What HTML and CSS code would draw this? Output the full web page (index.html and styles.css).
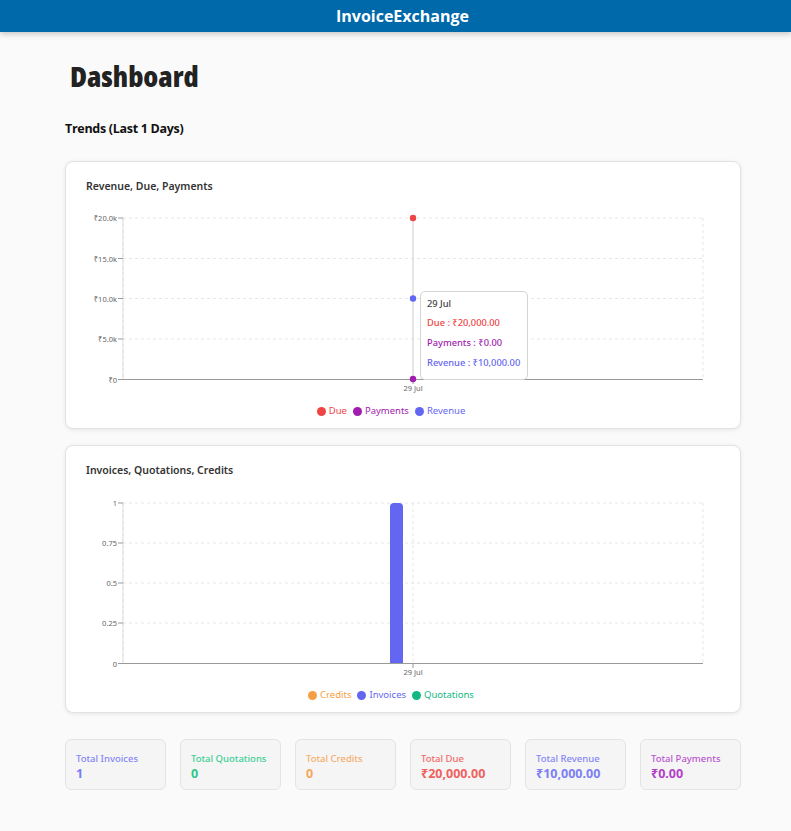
FILE: index.html
```html
<!DOCTYPE html>
<html>
<head>
<meta charset="utf-8">
<link rel="stylesheet" href="styles.css">
</head>
<body>
<header class="topbar">InvoiceExchange</header>
<main class="main">
  <h1 class="page-title">Dashboard</h1>
  <h2 class="section-title">Trends (Last 1 Days)</h2>

  <section class="card">
    <h3 class="card-title">Revenue, Due, Payments</h3>
    <div class="chart">
      <svg class="chart-svg" width="637" height="196" viewBox="0 0 637 196">
        <g class="grid">
          <line x1="37" y1="17" x2="617" y2="17"/>
          <line x1="37" y1="57.5" x2="617" y2="57.5"/>
          <line x1="37" y1="97.5" x2="617" y2="97.5"/>
          <line x1="37" y1="138" x2="617" y2="138"/>
          <line x1="37" y1="17" x2="37" y2="178"/>
          <line x1="617" y1="17" x2="617" y2="178"/>
        </g>
        <g class="axis">
          <line x1="37" y1="178.5" x2="617" y2="178.5"/>
          <line x1="37" y1="17" x2="37" y2="178" class="yaxis"/>
          <line x1="32" y1="17" x2="37" y2="17"/>
          <line x1="32" y1="57.5" x2="37" y2="57.5"/>
          <line x1="32" y1="97.5" x2="37" y2="97.5"/>
          <line x1="32" y1="138" x2="37" y2="138"/>
          <line x1="32" y1="178.5" x2="37" y2="178.5"/>
          <line x1="327" y1="178.5" x2="327" y2="183"/>
        </g>
        <g class="ticks">
          <text x="31" y="20">₹20.0k</text>
          <text x="31" y="60.5">₹15.0k</text>
          <text x="31" y="100.5">₹10.0k</text>
          <text x="31" y="141">₹5.0k</text>
          <text x="31" y="181.5">₹0</text>
        </g>
        <text class="xtick" x="327" y="190">29 Jul</text>
        <line class="cursor" x1="327" y1="17" x2="327" y2="178"/>
        <circle cx="327" cy="17" r="3.2" fill="#ef4444"/>
        <circle cx="327" cy="97.5" r="3.2" fill="#6366f1"/>
        <circle cx="327" cy="178" r="3.2" fill="#a21caf"/>
      </svg>
      <div class="tooltip">
        <div class="tt-label">29 Jul</div>
        <div class="tt-row due">Due : ₹20,000.00</div>
        <div class="tt-row pay">Payments : ₹0.00</div>
        <div class="tt-row rev">Revenue : ₹10,000.00</div>
      </div>
    </div>
    <ul class="legend">
      <li class="due"><span class="dot"></span>Due</li>
      <li class="pay"><span class="dot"></span>Payments</li>
      <li class="rev"><span class="dot"></span>Revenue</li>
    </ul>
  </section>

  <section class="card">
    <h3 class="card-title">Invoices, Quotations, Credits</h3>
    <div class="chart">
      <svg class="chart-svg" width="637" height="196" viewBox="0 0 637 196">
        <g class="grid">
          <line x1="37" y1="18" x2="617" y2="18"/>
          <line x1="37" y1="58" x2="617" y2="58"/>
          <line x1="37" y1="98" x2="617" y2="98"/>
          <line x1="37" y1="138" x2="617" y2="138"/>
          <line x1="37" y1="18" x2="37" y2="178"/>
          <line x1="327" y1="18" x2="327" y2="178"/>
          <line x1="617" y1="18" x2="617" y2="178"/>
        </g>
        <path d="M304 178 V22 Q304 18 308 18 H313 Q317 18 317 22 V178 Z" fill="#6366f1"/>
        <g class="axis">
          <line x1="37" y1="178.5" x2="617" y2="178.5"/>
          <line x1="37" y1="18" x2="37" y2="178" class="yaxis"/>
          <line x1="32" y1="18" x2="37" y2="18"/>
          <line x1="32" y1="58" x2="37" y2="58"/>
          <line x1="32" y1="98" x2="37" y2="98"/>
          <line x1="32" y1="138" x2="37" y2="138"/>
          <line x1="32" y1="178.5" x2="37" y2="178.5"/>
          <line x1="327" y1="178.5" x2="327" y2="183"/>
        </g>
        <g class="ticks">
          <text x="31" y="21">1</text>
          <text x="31" y="61">0.75</text>
          <text x="31" y="101">0.5</text>
          <text x="31" y="141">0.25</text>
          <text x="31" y="181.5">0</text>
        </g>
        <text class="xtick" x="327" y="190">29 Jul</text>
      </svg>
    </div>
    <ul class="legend">
      <li class="cred"><span class="dot"></span>Credits</li>
      <li class="inv"><span class="dot"></span>Invoices</li>
      <li class="quo"><span class="dot"></span>Quotations</li>
    </ul>
  </section>

  <div class="stats">
    <div class="stat inv"><div class="stat-label">Total Invoices</div><div class="stat-value">1</div></div>
    <div class="stat quo"><div class="stat-label">Total Quotations</div><div class="stat-value">0</div></div>
    <div class="stat cred"><div class="stat-label">Total Credits</div><div class="stat-value">0</div></div>
    <div class="stat due"><div class="stat-label">Total Due</div><div class="stat-value">₹20,000.00</div></div>
    <div class="stat rev"><div class="stat-label">Total Revenue</div><div class="stat-value">₹10,000.00</div></div>
    <div class="stat pay"><div class="stat-label">Total Payments</div><div class="stat-value">₹0.00</div></div>
  </div>
</main>
</body>
</html>
```

FILE: styles.css
```css
* { box-sizing: border-box; }
html, body { margin: 0; padding: 0; }
body {
  background: #fafafa;
  font-family: "Noto Sans", "Open Sans", sans-serif;
  color: #222;
}
.topbar {
  height: 32px;
  background: #0069aa;
  color: #fff;
  text-align: center;
  padding-left: 14px;
  font-family: "Open Sans", sans-serif;
  font-weight: 700;
  font-size: 16px;
  line-height: 32px;
  box-shadow: 0 2px 6px rgba(0,0,0,0.22);
  position: relative;
}
.main {
  padding: 0 50px 40px 65px;
}
.page-title {
  margin: 25px 0 0 5px;
  font-family: "Open Sans", sans-serif;
  font-stretch: 75%;
  font-weight: 800;
  font-size: 29px;
  line-height: 38px;
  color: #222;
}
.section-title {
  margin: 25px 0 0 0;
  font-family: "Open Sans", sans-serif;
  font-weight: 700;
  font-size: 12.5px;
  letter-spacing: -0.3px;
  line-height: 18px;
  color: #111;
}
.card {
  background: #fff;
  border: 1px solid #e2e2e2;
  border-radius: 8px;
  box-shadow: 0 1px 4px rgba(0,0,0,0.08);
  padding: 17px 20px 11px 20px;
  margin-top: 23px;
}
.card + .card { margin-top: 16px; }
.card-title {
  margin: 0;
  font-size: 10.5px;
  font-weight: 600;
  line-height: 14px;
  color: #333;
}
.chart {
  position: relative;
  margin-top: 8px;
  height: 196px;
}
.chart-svg { display: block; }
.grid line {
  stroke: #e6e6e6;
  stroke-width: 1;
  stroke-dasharray: 3 3;
}
.axis line {
  stroke: #999;
  stroke-width: 1;
}
.axis .yaxis { stroke: #ddd; }
.ticks text {
  font-size: 7.5px;
  fill: #666;
  text-anchor: end;
  font-family: "Noto Sans", sans-serif;
}
.xtick {
  font-size: 7.5px;
  fill: #666;
  text-anchor: middle;
  font-family: "Noto Sans", sans-serif;
}
.cursor { stroke: #ccc; stroke-width: 1; }
.tooltip {
  position: absolute;
  left: 334px;
  top: 90px;
  width: 108px;
  height: 89px;
  background: #fff;
  border: 1px solid #d4d4d4;
  border-radius: 5px;
  padding: 5px 6px;
  font-size: 9.3px;
  white-space: nowrap;
}
.tt-label { color: #444; line-height: 14px; margin-bottom: 2px; font-weight: 500; }
.tt-row { line-height: 20px; font-weight: 500; }
.tooltip .due { color: #ef4444; }
.tooltip .pay { color: #a21caf; }
.tooltip .rev { color: #6366f1; }
.legend {
  list-style: none;
  margin: 8px 0 0 0;
  padding: 0 24px 0 0;
  display: flex;
  justify-content: center;
  gap: 6px;
  font-size: 9.5px;
  line-height: 12px;
}
.legend li { display: flex; align-items: center; gap: 3px; }
.dot { width: 9px; height: 9px; border-radius: 50%; display: inline-block; }
.legend .due { color: #ef4444; } .legend .due .dot { background: #ef4444; }
.legend .pay { color: #a21caf; } .legend .pay .dot { background: #a21caf; }
.legend .rev { color: #6366f1; } .legend .rev .dot { background: #6366f1; }
.legend .cred { color: #f59e42; } .legend .cred .dot { background: #f59e42; }
.legend .inv { color: #6366f1; } .legend .inv .dot { background: #6366f1; }
.legend .quo { color: #10b981; } .legend .quo .dot { background: #10b981; }
.stats {
  display: grid;
  grid-template-columns: repeat(6, 1fr);
  gap: 14px;
  margin-top: 26px;
}
.stat {
  background: #f5f5f5;
  border: 1px solid #e4e4e4;
  border-radius: 6px;
  padding: 12px 10px 7px 10px;
  height: 51px;
}
.stat-label { font-size: 9.5px; font-weight: 500; line-height: 13px; }
.stat-value { font-size: 12.5px; font-weight: 700; line-height: 18px; }
.stat.inv { color: #8486f8; } .stat.inv .stat-value { color: #7a7cf5; }
.stat.quo { color: #3ecf95; } .stat.quo .stat-value { color: #2ec88a; }
.stat.cred { color: #f7ad6c; } .stat.cred .stat-value { color: #f5a55c; }
.stat.due { color: #f26b6b; } .stat.due .stat-value { color: #f06060; }
.stat.rev { color: #8587f6; } .stat.rev .stat-value { color: #7c7ef4; }
.stat.pay { color: #bb55d0; } .stat.pay .stat-value { color: #b23fc8; }
```
